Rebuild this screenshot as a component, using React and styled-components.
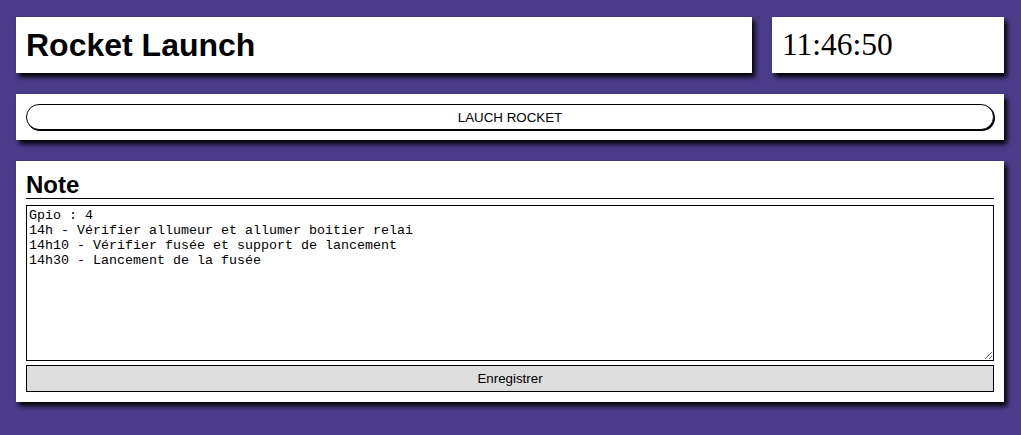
import styled, { createGlobalStyle } from "styled-components";
import { useState } from "react";

const GlobalStyle = createGlobalStyle`
  html, body {
    margin: 0;
    background: #4b3c8a;
    font-family: "Liberation Sans", Arial, sans-serif;
  }
`;

const Page = styled.div`
  display: flex;
  flex-direction: column;
  gap: 21px;
  padding: 17px 17px 16px 16px;
`;

const TopRow = styled.div`
  display: grid;
  grid-template-columns: 1fr 232px;
  gap: 20px;
`;

const Card = styled.div`
  background: #fff;
  box-shadow: 3px 4px 5px #000;
  padding: 10px;
  box-sizing: border-box;
`;

const HeaderCard = styled(Card)`
  height: 56px;
  display: flex;
  align-items: center;
  padding: 0 10px;
`;

const Title = styled.h1`
  margin: 0;
  font-size: 32px;
  font-weight: bold;
  color: #000;
`;

const Clock = styled.div`
  font-family: "Liberation Serif", "Times New Roman", serif;
  font-size: 31.5px;
  color: #000;
`;

const LaunchButton = styled.button`
  display: block;
  width: 100%;
  height: 26px;
  background: #fff;
  border: 1px solid #000;
  border-radius: 14px;
  box-shadow: 1px 1px 0 #000;
  font-family: "Liberation Sans", Arial, sans-serif;
  font-size: 13.333px;
  color: #000;
  cursor: pointer;
`;

const NoteCard = styled(Card)`
  display: flex;
  flex-direction: column;
`;

const NoteTitle = styled.h2`
  margin: 0 0 6px;
  font-size: 24px;
  font-weight: bold;
  line-height: 27px;
  border-bottom: 1px solid #000;
`;

const NoteArea = styled.textarea`
  display: block;
  box-sizing: border-box;
  width: 100%;
  height: 156px;
  margin: 0;
  padding: 2px;
  border: 1px solid #000;
  font-family: "Liberation Mono", "Courier New", monospace;
  font-size: 13.333px;
  line-height: 15px;
  color: #000;
`;

const SaveButton = styled.button`
  display: block;
  width: 100%;
  height: 27px;
  margin-top: 4px;
  background: #ddd;
  border: 1px solid #000;
  font-family: "Liberation Sans", Arial, sans-serif;
  font-size: 13.333px;
  color: #000;
`;

const initialNote = `Gpio : 4
14h - Vérifier allumeur et allumer boitier relai
14h10 - Vérifier fusée et support de lancement
14h30 - Lancement de la fusée`;

export default function App() {
  const [note, setNote] = useState(initialNote);

  return (
    <>
      <GlobalStyle />
      <Page>
        <TopRow>
          <HeaderCard>
            <Title>Rocket Launch</Title>
          </HeaderCard>
          <HeaderCard>
            <Clock>11:46:50</Clock>
          </HeaderCard>
        </TopRow>
        <Card>
          <LaunchButton>LAUCH ROCKET</LaunchButton>
        </Card>
        <NoteCard>
          <NoteTitle>Note</NoteTitle>
          <NoteArea value={note} onChange={(e) => setNote(e.target.value)} />
          <SaveButton>Enregistrer</SaveButton>
        </NoteCard>
      </Page>
    </>
  );
}
